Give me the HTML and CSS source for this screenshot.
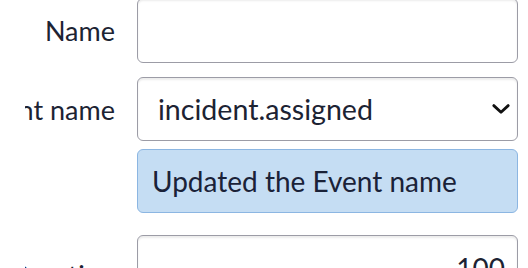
FILE: index.html
```html
<!DOCTYPE html>
<html>
<head>
<meta charset="utf-8">
<link rel="stylesheet" href="styles.css">
</head>
<body>
<form class="form">
  <div class="row">
    <label class="label"><span>Name</span></label>
    <input class="input" type="text" value="">
  </div>
  <div class="row">
    <label class="label"><span>Event name</span></label>
    <div class="select">
      <span class="select-value">incident.assigned</span>
      <svg class="chev" width="18" height="10" viewBox="0 0 18 10"><path d="M1.8 1.6 L9 8.2 L16.2 1.6" fill="none" stroke="#111" stroke-width="2.8" stroke-linecap="round" stroke-linejoin="round"/></svg>
    </div>
  </div>
  <div class="row row-info">
    <span class="label"></span>
    <div class="info">Updated the Event name</div>
  </div>
  <div class="row">
    <label class="label label-low"><span>Duration</span></label>
    <input class="input num" type="text" value="100">
  </div>
</form>
</body>
</html>
```

FILE: styles.css
```css
html, body {
  margin: 0;
  padding: 0;
  background: #ffffff;
  overflow: hidden;
}
body {
  width: 528px;
  height: 268px;
  font-family: Lato, "Open Sans", sans-serif;
  color: #1c2333;
}
.form {
  display: flex;
  flex-direction: column;
  margin-top: -2px;
  padding-left: 25px;
  padding-right: 10px;
}
.row {
  display: grid;
  grid-template-columns: 90px 1fr;
  column-gap: 22px;
  align-items: center;
  margin-bottom: 14px;
}
.row-info {
  margin-top: -6px;
  margin-bottom: 22px;
}
.label {
  display: flex;
  justify-content: flex-end;
  overflow: hidden;
  white-space: nowrap;
  font-size: 27px;
  color: #1c2333;
}
.label span {
  flex: none;
}
.label-low {
  padding-top: 14px;
}
.input {
  box-sizing: border-box;
  height: 65px;
  width: 100%;
  border: 1.5px solid #9c9ca6;
  border-radius: 6px;
  box-shadow: inset 0 2px 2px rgba(0, 0, 0, 0.08);
  font-family: Lato, sans-serif;
  font-size: 28px;
  color: #1c2333;
  padding: 0 12px 0 20px;
  background: #fff;
  outline: none;
}
.num {
  text-align: right;
}
.select {
  box-sizing: border-box;
  height: 64px;
  display: flex;
  align-items: center;
  justify-content: space-between;
  border: 1.5px solid #9c9ca6;
  border-radius: 6px;
  box-shadow: inset 0 2px 2px rgba(0, 0, 0, 0.08);
  padding: 0 7px 0 20px;
  font-size: 28.6px;
  background: #fff;
}
.chev {
  display: block;
}
.info {
  box-sizing: border-box;
  height: 64px;
  display: flex;
  align-items: center;
  padding: 0 14px;
  background: #c5ddf3;
  border: 1.5px solid #8cb6e2;
  border-radius: 6px;
  font-size: 28px;
  color: #1a2238;
}
```
